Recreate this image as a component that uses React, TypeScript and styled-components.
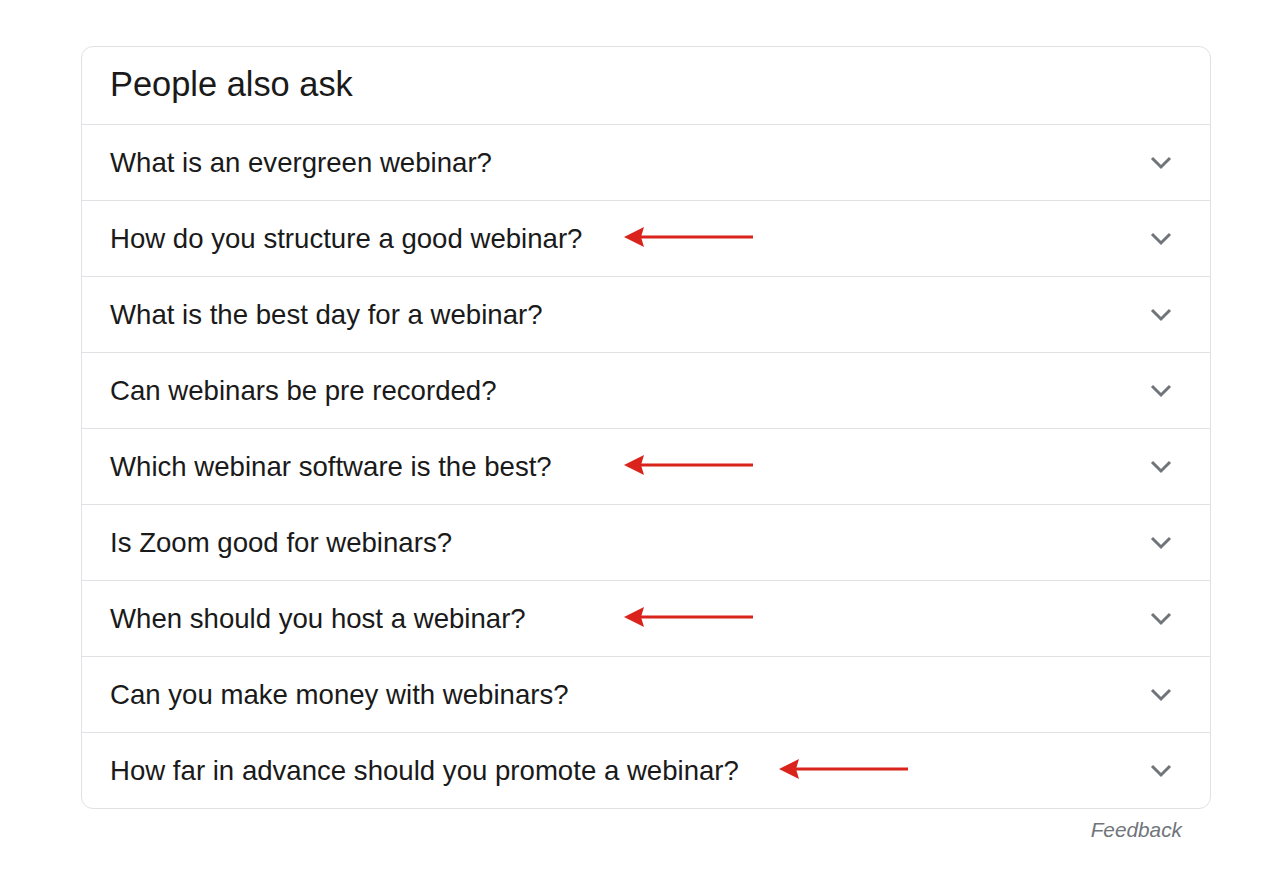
import styled, { createGlobalStyle } from "styled-components";

const GlobalStyle = createGlobalStyle`
  body {
    margin: 0;
    background: #ffffff;
    font-family: "Liberation Sans", Arial, sans-serif;
    color: #222222;
  }
`;

const Page = styled.div`
  padding: 46px 0 0 81px;
  width: 1130px;
`;

const Card = styled.div`
  border: 1px solid #dfe1e5;
  border-radius: 12px;
  background: #ffffff;
  overflow: hidden;
`;

const Header = styled.div`
  height: 77px;
  display: flex;
  align-items: center;
  padding: 0 28px 2px;
  box-sizing: border-box;
  font-size: 34.4px;
  color: #1a1a1a;
`;

const Row = styled.div`
  position: relative;
  height: 76px;
  border-top: 1px solid #dfe1e5;
  box-sizing: border-box;
  display: flex;
  align-items: center;
  justify-content: space-between;
  padding: 0 38px 0 28px;
  font-size: 27.6px;
  color: #1a1a1a;
`;

const Chevron = styled.svg`
  width: 22px;
  height: 14px;
  flex-shrink: 0;
`;

const Arrow = styled.svg<{ $left: number }>`
  position: absolute;
  left: ${(p) => p.$left}px;
  top: 50%;
  transform: translateY(-50%);
  width: 132px;
  height: 22px;
  margin-top: -2px;
`;

const Footer = styled.div`
  display: flex;
  justify-content: flex-end;
  padding: 9px 29px 0 0;
  font-size: 20.8px;
  font-style: italic;
  color: #70757a;
`;

const questions: { text: string; arrow?: number }[] = [
  { text: "What is an evergreen webinar?" },
  { text: "How do you structure a good webinar?", arrow: 541 },
  { text: "What is the best day for a webinar?" },
  { text: "Can webinars be pre recorded?" },
  { text: "Which webinar software is the best?", arrow: 541 },
  { text: "Is Zoom good for webinars?" },
  { text: "When should you host a webinar?", arrow: 541 },
  { text: "Can you make money with webinars?" },
  { text: "How far in advance should you promote a webinar?", arrow: 696 },
];

const RedArrow = ({ left }: { left: number }) => (
  <Arrow $left={left} viewBox="0 0 132 22">
    <line x1="16" y1="11" x2="130" y2="11" stroke="#d9231b" strokeWidth="3" />
    <polygon points="1,11 21,1 18,11 21,21" fill="#d9231b" />
  </Arrow>
);

export default function App() {
  return (
    <>
      <GlobalStyle />
      <Page>
        <Card>
          <Header>People also ask</Header>
          {questions.map((q) => (
            <Row key={q.text}>
              <span>{q.text}</span>
              {q.arrow !== undefined && <RedArrow left={q.arrow} />}
              <Chevron viewBox="0 0 22 14">
                <polyline
                  points="2,2 11,11 20,2"
                  fill="none"
                  stroke="#70757a"
                  strokeWidth="3"
                />
              </Chevron>
            </Row>
          ))}
        </Card>
        <Footer>Feedback</Footer>
      </Page>
    </>
  );
}
